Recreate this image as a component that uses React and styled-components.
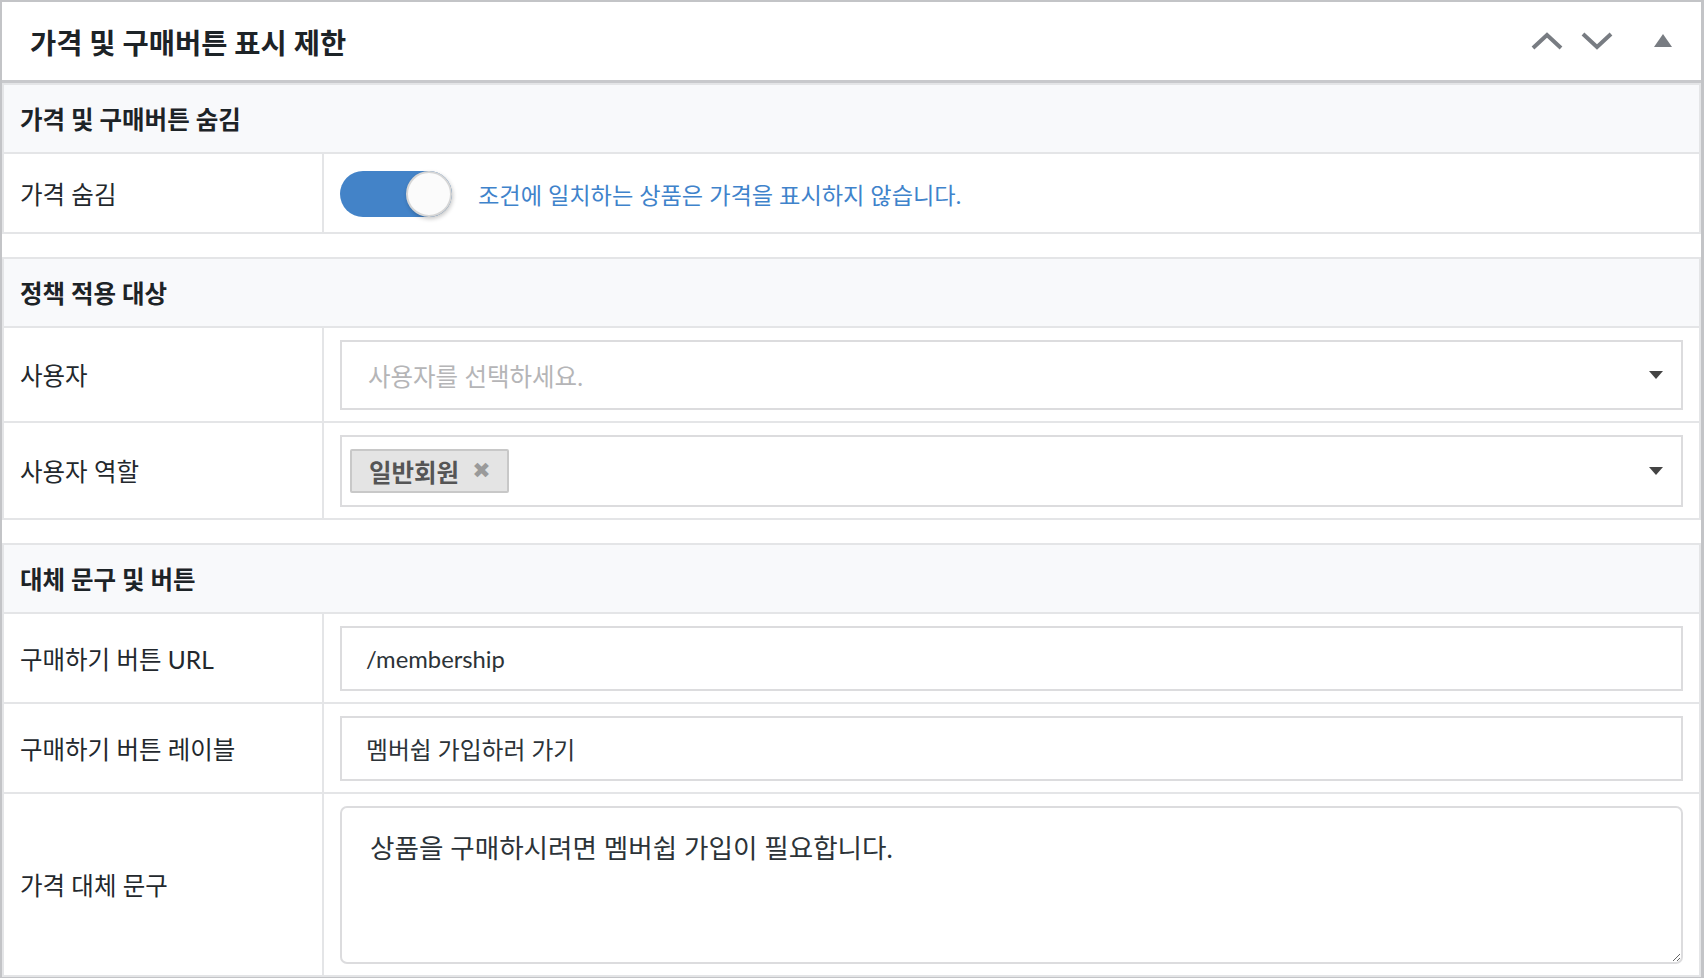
import React from 'react'
import styled, { createGlobalStyle } from 'styled-components';

const FONT = `Lato, "Noto Sans CJK KR", sans-serif`;

const GlobalStyle = createGlobalStyle`
    html, body {
        margin: 0;
        padding: 0;
        background: #ffffff;
    }
    body {
        font-family: ${FONT};
        color: #23282d;
    }
    * {
        box-sizing: border-box;
    }
`;

const Postbox = styled.div`
    width: 1704px;
    border: 2px solid #c3c4c7;
    border-right-width: 3px;
    background: #ffffff;
`;

const Header = styled.div`
    height: 81px;
    display: flex;
    align-items: center;
    justify-content: space-between;
    padding: 0 29px 0 28px;
    border-bottom: 3px solid #c8c9cc;
`;

const Title = styled.h2`
    margin: 0;
    font-size: 28.5px;
    font-weight: 700;
    color: #1d2327;
`;

const HeaderActions = styled.div`
    display: flex;
    align-items: center;
`;

const IconButton = styled.button`
    border: 0;
    background: none;
    padding: 0;
    margin-left: ${p => p.$gap || 0}px;
    display: flex;
    align-items: center;
    cursor: pointer;
`;

const Body = styled.div`
    display: flex;
    flex-direction: column;
    gap: 23px;
`;

const Section = styled.section`
    border: 2px solid #e4e5e7;
    border-bottom: 0;
`;

const SectionTitle = styled.div`
    height: 69px;
    display: flex;
    align-items: center;
    padding-left: 16px;
    background: #f8f9fb;
    border-bottom: 2px solid #e4e5e7;
    font-size: 24.5px;
    font-weight: 700;
    color: #1d2327;
`;

const Row = styled.div`
    display: grid;
    grid-template-columns: 320px 1fr;
    min-height: ${p => p.$minHeight || 0}px;
    border-bottom: 2px solid #e4e5e7;
`;

const Label = styled.div`
    display: flex;
    align-items: center;
    padding-left: 16px;
    border-right: 2px solid #e4e5e7;
    font-size: 24.5px;
    color: #23282d;
`;

const Field = styled.div`
    display: flex;
    align-items: center;
    padding: 12px 16px 11px 16px;
`;

const Switch = styled.div`
    position: relative;
    width: 112px;
    height: 46px;
    border-radius: 23px;
    background: #4383c8;
    flex-shrink: 0;
`;

const Knob = styled.span`
    position: absolute;
    top: 0;
    right: 0;
    width: 46px;
    height: 46px;
    border-radius: 50%;
    background: #fbfbfb;
    border: 2px solid #d6d6d6;
    box-shadow: 1px 2px 4px rgba(0, 0, 0, 0.22);
`;

const Hint = styled.span`
    margin-left: 26px;
    font-size: 23.2px;
    color: #3f83cb;
`;

const SelectBox = styled.div`
    flex: 1;
    height: ${p => p.$height || 70}px;
    display: flex;
    align-items: center;
    justify-content: space-between;
    padding: 0 18px 0 ${p => p.$padLeft || 26}px;
    border: 2px solid #dcdcde;
    background: #ffffff;
`;

const Placeholder = styled.span`
    font-size: 24.5px;
    color: #b5b5b7;
`;

const Tag = styled.span`
    display: inline-flex;
    align-items: center;
    height: 44px;
    padding: 0 16px 0 17px;
    background: #e4e4e4;
    border: 2px solid #c8c8c8;
    border-radius: 2px;
    font-size: 24.5px;
    font-weight: 700;
    color: #555555;
`;

const TagRemove = styled.span`
    margin-left: 13px;
    font-family: "DejaVu Sans", sans-serif;
    font-size: 22px;
    line-height: 1;
    color: #9a9a9a;
`;

const TextInput = styled.input`
    flex: 1;
    height: 65px;
    padding: 0 24px;
    border: 2px solid #dcdcde;
    border-radius: 0;
    background: #ffffff;
    font-family: ${FONT};
    font-size: 23.8px;
    color: #2c3338;
    outline: none;
`;

const TextArea = styled.textarea`
    flex: 1;
    height: 158px;
    padding: 22px 28px;
    border: 2px solid #dcdcde;
    border-radius: 7px;
    background: #ffffff;
    font-family: ${FONT};
    font-size: 26.6px;
    line-height: 1.4;
    color: #2c3338;
    outline: none;
    resize: vertical;
`;

const Chevron = ({ up }) => (
    <svg width="32" height="18" viewBox="0 0 32 18">
        <polyline
            points={up ? '2,16 16,3 30,16' : '2,2 16,15 30,2'}
            fill="none"
            stroke="#787c82"
            strokeWidth="4"
        />
    </svg>
);

const Triangle = () => (
    <svg width="18" height="14" viewBox="0 0 18 14">
        <polygon points="9,0 18,13 0,13" fill="#787c82" />
    </svg>
);

const Caret = () => (
    <svg width="14" height="8" viewBox="0 0 14 8">
        <polygon points="0,0 14,0 7,8" fill="#444444" />
    </svg>
);

const App = () => {
    return (
        <>
            <GlobalStyle />
            <Postbox>
                <Header>
                    <Title>가격 및 구매버튼 표시 제한</Title>
                    <HeaderActions>
                        <IconButton aria-label="위로 이동"><Chevron up /></IconButton>
                        <IconButton $gap={18} aria-label="아래로 이동"><Chevron /></IconButton>
                        <IconButton $gap={41} aria-label="패널 접기"><Triangle /></IconButton>
                    </HeaderActions>
                </Header>

                <Body>
                    <Section>
                        <SectionTitle>가격 및 구매버튼 숨김</SectionTitle>
                        <Row $minHeight={80}>
                            <Label>가격 숨김</Label>
                            <Field>
                                <Switch><Knob /></Switch>
                                <Hint>조건에 일치하는 상품은 가격을 표시하지 않습니다.</Hint>
                            </Field>
                        </Row>
                    </Section>

                    <Section>
                        <SectionTitle>정책 적용 대상</SectionTitle>
                        <Row>
                            <Label>사용자</Label>
                            <Field>
                                <SelectBox>
                                    <Placeholder>사용자를 선택하세요.</Placeholder>
                                    <Caret />
                                </SelectBox>
                            </Field>
                        </Row>
                        <Row>
                            <Label>사용자 역할</Label>
                            <Field>
                                <SelectBox $height={72} $padLeft={8}>
                                    <Tag>
                                        일반회원
                                        <TagRemove>✖</TagRemove>
                                    </Tag>
                                    <Caret />
                                </SelectBox>
                            </Field>
                        </Row>
                    </Section>

                    <Section>
                        <SectionTitle>대체 문구 및 버튼</SectionTitle>
                        <Row>
                            <Label>구매하기 버튼 URL</Label>
                            <Field>
                                <TextInput readOnly defaultValue="/membership" />
                            </Field>
                        </Row>
                        <Row>
                            <Label>구매하기 버튼 레이블</Label>
                            <Field>
                                <TextInput readOnly defaultValue="멤버쉽 가입하러 가기" />
                            </Field>
                        </Row>
                        <Row>
                            <Label>가격 대체 문구</Label>
                            <Field>
                                <TextArea readOnly defaultValue="상품을 구매하시려면 멤버쉽 가입이 필요합니다." />
                            </Field>
                        </Row>
                    </Section>
                </Body>
            </Postbox>
        </>
    )
}

export default App
